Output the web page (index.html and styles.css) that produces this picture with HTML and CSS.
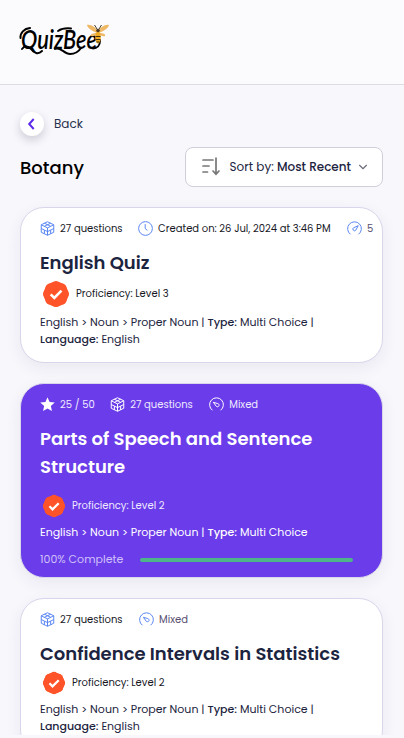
FILE: index.html
```html
<!DOCTYPE html>
<html lang="en">
<head>
<meta charset="utf-8">
<title>QuizBee – Botany</title>
<link rel="stylesheet" href="styles.css">
</head>
<body>
<svg class="defs" aria-hidden="true">
  <symbol id="cube" viewBox="0 0 24 24"><path d="M12 1.200 22 6v12L12 22.800 2 18V6zM2 6l10 5 10-5M12 11v11.800M7 8.500l10-5M17 8.500l-10-5M2 12l5 2.500v6M22 12l-5 2.500v6M7 14.500l5 2.500 5-2.500"/></symbol>
  <symbol id="clock" viewBox="0 0 24 24"><circle cx="12" cy="12" r="11"/><path d="M11.500 5v7l3.500 3"/></symbol>
  <symbol id="gauge" viewBox="0 0 24 24"><path d="M5.500 21.200a11 11 0 1 1 13 0"/><path class="solid" d="M18 7.500 14.200 14.400a2.600 2.600 0 1 1-3.600-3.600z"/></symbol>
  <symbol id="gauge-left" viewBox="0 0 24 24"><path d="M5.500 21.200a11 11 0 1 1 13 0"/><path class="solid" d="M7 8.500 14 10.500a2.600 2.600 0 1 1-2.500 4.200z"/></symbol>
  <symbol id="star" viewBox="0 0 24 24"><path d="m12 .5 3.300 7.300 8.300.900-6.200 5.500 1.700 8.100L12 18.300l-7.100 4 1.700-8.100L.400 8.700l8.300-.900z"/></symbol>
  <symbol id="badge" viewBox="0 0 28 28"><g fill="#ff5329"><circle cx="14" cy="14" r="12.300"/><circle cx="14" cy="6.300" r="5.300"/><circle cx="19.400" cy="8.600" r="5.300"/><circle cx="21.700" cy="14" r="5.300"/><circle cx="19.400" cy="19.400" r="5.300"/><circle cx="14" cy="21.700" r="5.300"/><circle cx="8.600" cy="19.400" r="5.300"/><circle cx="6.300" cy="14" r="5.300"/><circle cx="8.600" cy="8.600" r="5.300"/></g><path d="m8.700 14.300 3.600 3.600 7.200-7.200" fill="none" stroke="#fff" stroke-width="2.600"/></symbol>
</svg>
<div class="screen">
  <header class="header">
    <svg class="logo" viewBox="0 0 92 36" role="img" aria-label="QuizBee">
      <text class="word" x="2" y="26.500" textLength="76" lengthAdjust="spacingAndGlyphs">QuizBee</text>
      <path d="M3 27c3-4 6-3 9 0 3 4 7 6 11 2M36 27c5-3 9 5 15 5 5 0 9-3 11-6M74 26.500c4 0 7-3 7-8M1.500 16C1 11 5 6.500 11 6M39 9c3-2 8-3 13-2.500" fill="none" stroke="#000" stroke-width="2" stroke-linecap="round"/>
      <g fill="#eeb865"><path d="M78 11C74 9 69 7 68 3c4-1 9 3 10.500 6zM80 11c4-2 9-4 10-8-4-1-9 3-10.500 6z"/><path d="M78 11c-4 0-7 1-6 3 2 1 5-1 6.500-2zM80 11c4 0 7 1 6 3-2 1-5-1-6.500-2z"/></g>
      <ellipse cx="79" cy="15.500" rx="2.800" ry="6" fill="#edaa22"/>
      <path d="M76.500 14.500h5M76.500 17.500h5M77.500 20h3M78 7l-2.500-4M80 7l2.500-4" stroke="#30220d" stroke-width=".9"/>
      <circle cx="79" cy="8.500" r="1.800" fill="#4b3921"/>
    </svg>
  </header>
  <main class="main">
    <a class="back"><span class="back-btn"><svg viewBox="0 0 24 24"><path d="M13.700 7 9.200 12l4.500 5"/></svg></span>Back</a>
    <div class="toolbar">
      <h1>Botany</h1>
      <div class="sort">
        <svg class="sort-icon" viewBox="0 0 20 20"><path d="M2 3h10M2 9h6M2 15h4.500M15 1v16M12 14l3 3.200L18 14"/></svg>
        <span>Sort by: <b>Most Recent</b></span>
        <svg class="chevron" viewBox="0 0 10 10"><path d="m1.300 3 3.700 3.700L8.700 3"/></svg>
      </div>
    </div>
    <section class="cards">
      <article class="card first">
        <div class="meta">
          <span><svg><use href="#cube"/></svg>27 questions</span>
          <span><svg><use href="#clock"/></svg>Created on: 26 Jul, 2024 at 3:46 PM</span>
          <span class="level"><svg><use href="#gauge"/></svg>5</span>
        </div>
        <h2>English Quiz</h2>
        <div class="prof large"><svg><use href="#badge"/></svg>Proficiency: Level 3</div>
        <p>English &gt; Noun &gt; Proper Noun | <b>Type:</b> Multi Choice | <b>Language:</b> English</p>
      </article>
      <article class="card active">
        <div class="meta">
          <span><svg class="filled"><use href="#star"/></svg>25 / 50</span>
          <span><svg><use href="#cube"/></svg>27 questions</span>
          <span class="level"><svg><use href="#gauge-left"/></svg>Mixed</span>
        </div>
        <h2>Parts of Speech and Sentence Structure</h2>
        <div class="prof"><svg><use href="#badge"/></svg>Proficiency: Level 2</div>
        <p>English &gt; Noun &gt; Proper Noun | <b>Type:</b> Multi Choice</p>
        <div class="progress"><span>100% Complete</span><div class="track"></div></div>
      </article>
      <article class="card">
        <div class="meta">
          <span><svg><use href="#cube"/></svg>27 questions</span>
          <span class="level"><svg><use href="#gauge-left"/></svg>Mixed</span>
        </div>
        <h2>Confidence Intervals in Statistics</h2>
        <div class="prof"><svg><use href="#badge"/></svg>Proficiency: Level 2</div>
        <p>English &gt; Noun &gt; Proper Noun | <b>Type:</b> Multi Choice | <b>Language:</b> English</p>
      </article>
    </section>
  </main>
</div>
</body>
</html>
```
FILE: styles.css
```css
* { box-sizing: border-box; margin: 0; }
body { background: #f8f7fc; font-family: Poppins, Inter, sans-serif; color: #1c2440; height: 738px; overflow: hidden; }
.defs { display: none; }
svg { flex: none; display: block; }
b { font-weight: 500; }
.screen { height: 735px; overflow: hidden; }
.header { height: 85px; padding: 22px 19px; background: #fbfbfe; border-bottom: 1px solid #dcdce2; }
.logo { width: 92px; height: 36px; overflow: visible; }
.word { font: italic 600 27px "Lato", sans-serif; }
.main { padding: 26px 21px 0 20px; }
.back { display: flex; align-items: center; gap: 10px; height: 26px; font-size: 12px; color: #27304c; }
.back-btn { width: 24px; height: 24px; border-radius: 50%; background: #fff; box-shadow: 0 4px 10px rgba(30, 30, 60, .2); }
.back-btn path { fill: none; stroke: #5b2be8; stroke-width: 2; }
.toolbar { display: flex; justify-content: space-between; align-items: center; margin-top: 10px; height: 40px; }
h1 { font-size: 18px; font-weight: 500; color: #000; }
.sort { display: flex; align-items: center; width: 198px; height: 40px; padding-left: 15px; border: 1px solid #cfcfdb; border-radius: 8px; background: #fff; font-size: 12px; white-space: nowrap; }
.sort-icon { width: 20px; height: 20px; margin-right: 8.500px; fill: none; stroke: #777; stroke-width: 1.700; stroke-linecap: round; }
.chevron { width: 10px; height: 10px; margin-left: 7px; fill: none; stroke: #667; stroke-width: 1.1; }
.cards { display: flex; flex-direction: column; gap: 20px; margin-top: 20px; }
.card { flex: none; height: 156px; padding: 13px 19px 0; border: 1px solid #d8d6ea; border-radius: 24px; background: #fff; box-shadow: 0 5px 16px rgba(40, 40, 80, .07); overflow: hidden; }
.card.active { height: 195px; background: #6b3ce9; color: #fff; }
.meta { display: flex; gap: 15.500px; height: 15px; font-size: 10px; line-height: 15px; white-space: nowrap; color: #17181f; }
.meta span { display: flex; gap: 5px; flex: none; }
.meta svg { width: 15px; height: 15px; fill: none; stroke: #5b87f2; stroke-width: 1.600; }
.meta .solid { fill: #5b87f2; stroke: none; }
.meta .level { color: #57506f; margin-left: 1px; }
h2 { font-size: 18px; font-weight: 600; line-height: 28px; margin-top: 13px; }
.prof { display: flex; align-items: center; gap: 6px; height: 28px; font-size: 10px; color: #17181f; margin-top: 1px; padding-left: 2px; }
.prof svg { width: 24px; height: 24px; }
.prof.large { height: 34px; margin-top: 0; }
.prof.large svg { width: 28px; height: 28px; }
p { font-size: 11px; line-height: 17px; margin-top: 4px; }
.first p { margin-top: 3px; }
.active .meta, .active .meta .level, .active .prof { color: #efeaff; }
.active .meta svg { stroke: #fff; }
.active .meta .solid, .active .meta .filled { fill: #fff; stroke: none; }
.active .prof { margin-top: 11px; }
.progress { display: flex; align-items: center; gap: 17px; height: 17px; margin-top: 10px; font-size: 11px; color: #cfc0fa; }
.track { width: 213px; height: 4px; border-radius: 2px; background: #4eb58b; }
```
